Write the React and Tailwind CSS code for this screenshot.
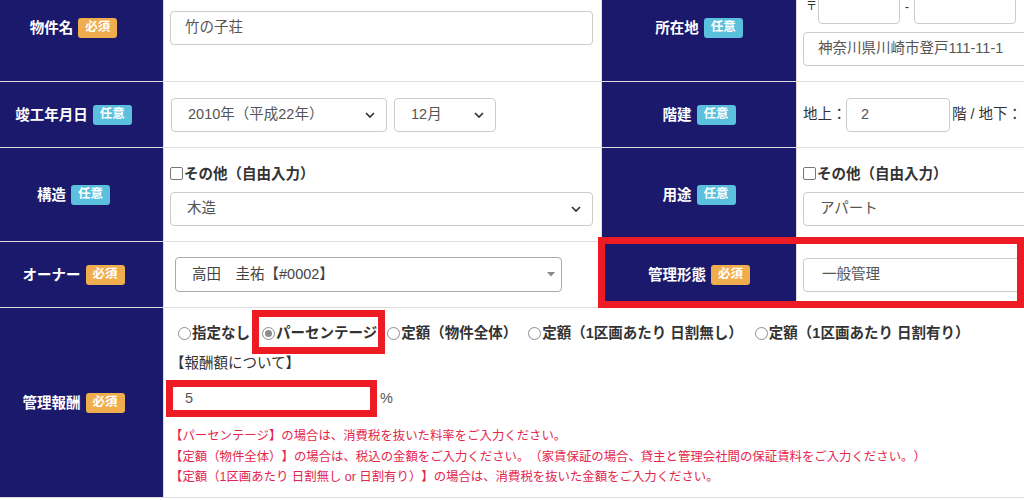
import React from "react";

const navy = "bg-[#1b196b]";

function Badge({ kind }) {
  const req = kind === "req";
  return (
    <span
      className={`inline-flex items-center justify-center w-[39px] h-[20px] rounded-[3px] text-[12.5px] font-bold leading-none text-white ${
        req ? "bg-[#f0ad4e]" : "bg-[#5bc0de]"
      }`}
    >
      {req ? "必須" : "任意"}
    </span>
  );
}

function Label({ text, kind, left, children }) {
  return (
    <div
      className={`relative ${navy} border-b border-r border-[#ddd] flex items-center justify-center gap-[5px] text-white font-bold text-[14.5px] leading-[20px] ${
        left ? "pr-[16px]" : ""
      }`}
    >
      <span>{text}</span>
      <Badge kind={kind} />
      {children}
    </div>
  );
}

function Input({ value, className = "" }) {
  return (
    <div
      className={`h-[34px] shrink-0 border border-[#ccc] rounded-[4px] bg-white flex items-center pl-[14px] text-[14.5px] text-[#555] whitespace-nowrap overflow-hidden ${className}`}
    >
      {value}
    </div>
  );
}

function Chevron() {
  return (
    <svg width="10" height="6" viewBox="0 0 10 6" className="shrink-0">
      <path d="M1 1 L5 5 L9 1" fill="none" stroke="#333" strokeWidth="1.7" />
    </svg>
  );
}

function Select({ value, className = "" }) {
  return (
    <div
      className={`h-[34px] shrink-0 border border-[#ccc] rounded-[4px] bg-white flex items-center justify-between pl-[16px] pr-[11px] text-[14.5px] text-[#555] whitespace-nowrap ${className}`}
    >
      <span>{value}</span>
      <Chevron />
    </div>
  );
}

function Check() {
  return (
    <div className="flex items-center text-[14.5px] font-bold text-[#333] leading-[20px]">
      <span className="w-[13px] h-[13px] border border-[#767676] rounded-[2px] bg-white mr-[1px]" />
      <span>その他（自由入力）</span>
    </div>
  );
}

function Radio({ label, checked, className = "" }) {
  return (
    <span className={`relative flex items-center ${className}`}>
      <span className="w-[13px] h-[13px] rounded-full border border-[#8d8d8d] bg-white flex items-center justify-center mr-[1px]">
        {checked && <span className="w-[7px] h-[7px] rounded-full bg-[#8d8d8d]" />}
      </span>
      <span>{label}</span>
      {checked && (
        <span className="absolute -left-[10px] -right-[8px] -top-[13px] -bottom-[11px] border-[7px] border-[#ed1c24]" />
      )}
    </span>
  );
}

function Cell({ children, className = "" }) {
  return (
    <div className={`border-b border-r border-[#ddd] bg-white flex flex-col justify-center ${className}`}>
      {children}
    </div>
  );
}

export default function App() {
  return (
    <div className="w-[1024px] h-[500px] overflow-hidden bg-white [text-spacing-trim:space-all] font-['Liberation_Sans','Noto_Sans_CJK_JP',sans-serif]">
      <div className="-mt-[26px] grid grid-cols-[164px_438px_195px_340px] grid-rows-[108px_66px_94px_66px_190px] w-[1137px]">
        {/* Row 1 */}
        <Label text="物件名" kind="req" left />
        <Cell className="pl-[6px] pr-[8px]">
          <Input value="竹の子荘" />
        </Cell>
        <Label text="所在地" kind="opt" />
        <Cell className="pl-[6px]">
          <div className="flex items-center text-[14px] text-[#333]">
            <span className="text-[11px] w-[15px] pl-[3px]">〒</span>
            <Input value="" className="w-[82px]" />
            <span className="w-[14px] text-center text-[13px]">-</span>
            <Input value="" className="w-[102px]" />
          </div>
          <Input value="神奈川県川崎市登戸111-11-1" className="mt-[8px] w-[330px]" />
        </Cell>

        {/* Row 2 */}
        <Label text="竣工年月日" kind="opt" left />
        <Cell className="pl-[7px]">
          <div className="flex gap-[7px]">
            <Select value="2010年（平成22年）" className="w-[216px]" />
            <Select value="12月" className="w-[102px]" />
          </div>
        </Cell>
        <Label text="階建" kind="opt" />
        <Cell className="pl-[6px]">
          <div className="flex items-center text-[14.5px] text-[#333] whitespace-nowrap">
            <span className="w-[43px]">地上：</span>
            <Input value="2" className="w-[104px]" />
            <span className="ml-[2px]">階 / 地下：</span>
            <Input value="" className="w-[104px] ml-[6px]" />
          </div>
        </Cell>

        {/* Row 3 */}
        <Label text="構造" kind="opt" left />
        <Cell className="pl-[6px] pr-[8px]">
          <Check />
          <Select value="木造" className="mt-[8px] w-full" />
        </Cell>
        <Label text="用途" kind="opt" />
        <Cell className="pl-[6px]">
          <Check />
          <Select value="アパート" className="mt-[8px] w-[330px]" />
        </Cell>

        {/* Row 4 */}
        <Label text="オーナー" kind="req" left />
        <Cell className="pl-[11px]">
          <div className="h-[35px] w-[387px] border border-[#aaa] rounded-[4px] bg-white flex items-center justify-between pl-[16px] pr-[6px] text-[14.5px] text-[#444] whitespace-nowrap">
            <span>高田　圭祐【#0002】</span>
            <svg width="8" height="5" viewBox="0 0 8 5">
              <path d="M0 0 L8 0 L4 4.5 Z" fill="#888" />
            </svg>
          </div>
        </Cell>
        <Label text="管理形態" kind="req">
          <span className="absolute -left-[4px] -top-[5px] w-[426px] h-[71px] border-[7px] border-[#ed1c24] z-10 pointer-events-none" />
        </Label>
        <Cell className="pl-[6px]">
          <Input value="一般管理" className="w-[330px] pl-[18px]" />
        </Cell>

        {/* Row 5 */}
        <Label text="管理報酬" kind="req" left />
        <div className="col-span-3 border-b border-[#ddd] bg-white flex flex-col pt-[15px] pl-[6px] text-[14.5px] text-[#333]">
          <div className="flex items-center font-bold leading-[20px] whitespace-nowrap pl-[8px]">
            <Radio label="指定なし" className="mr-[12px]" />
            <Radio label="パーセンテージ" checked className="mr-[10px]" />
            <Radio label="定額（物件全体）" className="mr-[11px]" />
            <Radio label="定額（1区画あたり 日割無し）" className="mr-[12px]" />
            <Radio label="定額（1区画あたり 日割有り）" />
          </div>
          <div className="mt-[10px] leading-[20px] text-[#333]">【報酬額について】</div>
          <div className="mt-[9px] flex items-center">
            <div className="relative">
              <Input value="5" className="w-[203px]" />
              <span className="absolute -left-[4px] -right-[4px] -top-[2px] -bottom-[1px] border-[7px] border-[#ed1c24] pointer-events-none" />
            </div>
            <span className="ml-[7px] text-[#555]">%</span>
          </div>
          <div className="mt-[10px] text-[12.4px] leading-[20.5px] text-[#e4254d] whitespace-nowrap">
            <div>【パーセンテージ】の場合は、消費税を抜いた料率をご入力ください。</div>
            <div>【定額（物件全体）】の場合は、税込の金額をご入力ください。（家賃保証の場合、貸主と管理会社間の保証賃料をご入力ください。）</div>
            <div>【定額（1区画あたり 日割無し or 日割有り）】の場合は、消費税を抜いた金額をご入力ください。</div>
          </div>
        </div>
      </div>
    </div>
  );
}
